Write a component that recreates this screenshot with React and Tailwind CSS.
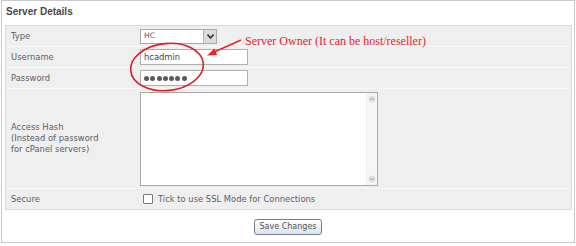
import React from "react";

export default function App() {
  const sans = { fontFamily: '"DejaVu Sans", Verdana, sans-serif' };
  return (
    <div className="w-[576px] h-[246px] bg-white relative overflow-hidden" style={sans}>
      <div className="ml-[1px] w-[574px] h-[243px] border border-[#c9c9c9] flex flex-col">
        <div
          className="h-[24px] pl-[4px] pt-[5px] text-[10px] font-bold text-[#484848] leading-[12px]"
          style={{ fontFamily: '"Liberation Sans", Arial, sans-serif' }}
        >
          Server Details
        </div>
        <div className="ml-[3px] mr-[2px] border border-[#d9d9d9] bg-[#efefef] text-[8.4px] text-[#5e5e5e]">
          <div className="grid grid-cols-[131px_1fr]">
            <div className="h-[21px] pl-[5px] flex items-center border-b border-[#f8f8f8]">Type</div>
            <div className="h-[21px] pl-[3px] flex items-center border-b border-[#f8f8f8]">
              <div className="w-[77px] h-[15px] bg-white border border-[#a9a9a9] flex items-center">
                <span className="flex-1 pl-[3px] text-[7.5px] text-[#555]">HC</span>
                <div className="w-[13px] h-[13px] border-l border-[#b5b5b5] bg-[#dcdcdc] flex items-center justify-center">
                  <svg width="7" height="5" viewBox="0 0 7 5"><path d="M0.5 0.5 L3.5 4 L6.5 0.5" fill="none" stroke="#333" strokeWidth="1.6" /></svg>
                </div>
              </div>
            </div>

            <div className="h-[21px] pl-[5px] flex items-center border-b border-[#f8f8f8]">Username</div>
            <div className="h-[21px] pl-[3px] flex items-center border-b border-[#f8f8f8]">
              <div className="w-[108px] h-[16px] bg-white border border-[#b0b0b0] flex items-center pl-[3px] text-[8.4px] text-[#444]">hcadmin</div>
            </div>

            <div className="h-[21px] pl-[5px] flex items-center border-b border-[#f8f8f8]">Password</div>
            <div className="h-[21px] pl-[3px] flex items-center border-b border-[#f8f8f8]">
              <div className="w-[108px] h-[16px] bg-white border border-[#b0b0b0] flex items-center pl-[3px] gap-[1.3px]">
                {[0, 1, 2, 3, 4, 5, 6].map((i) => (
                  <span key={i} className="w-[5px] h-[5px] rounded-full bg-[#5a5a5a]" />
                ))}
              </div>
            </div>

            <div className="h-[100px] pl-[5px] flex flex-col justify-center leading-[11px] border-b border-[#f8f8f8]">
              <span>Access Hash</span>
              <span>(Instead of password</span>
              <span>for cPanel servers)</span>
            </div>
            <div className="h-[100px] pl-[3px] flex items-center border-b border-[#f8f8f8]">
              <div className="w-[238px] h-[94px] bg-white border border-[#a9a9a9] flex justify-end">
                <div className="w-[11px] h-full bg-[#f6f6f6] border-l border-[#ececec] flex flex-col justify-between items-center py-[2px]">
                  <svg width="8" height="8" viewBox="0 0 8 8"><circle cx="4" cy="4" r="3.5" fill="#e2e2dc" /><path d="M2 5 L4 3 L6 5" fill="none" stroke="#aaa" strokeWidth="1" /></svg>
                  <svg width="8" height="8" viewBox="0 0 8 8"><circle cx="4" cy="4" r="3.5" fill="#e2e2dc" /><path d="M2 3 L4 5 L6 3" fill="none" stroke="#aaa" strokeWidth="1" /></svg>
                </div>
              </div>
            </div>

            <div className="h-[20px] pl-[5px] flex items-center">Secure</div>
            <div className="h-[20px] pl-[6px] flex items-center gap-[5px]">
              <span className="w-[10px] h-[10px] border border-[#7a7a7a] bg-white rounded-[1px]" />
              <span>Tick to use SSL Mode for Connections</span>
            </div>
          </div>
        </div>
        <div className="flex-1 flex items-center justify-center pt-[1px]">
          <button className="w-[68px] h-[16px] rounded-[3px] border border-[#6f7f98] bg-gradient-to-b from-[#ffffff] to-[#dde3ec] text-[8px] text-[#555] leading-[12px]">
            Save Changes
          </button>
        </div>
      </div>

      <div
        className="absolute left-[245px] top-[34px] text-[12px] text-[#e3262b] leading-[14px] whitespace-nowrap"
        style={{ fontFamily: '"Liberation Serif", serif' }}
      >
        Server Owner (It can be host/reseller)
      </div>
      <svg className="absolute left-0 top-0 pointer-events-none" width="576" height="246" viewBox="0 0 576 246">
        <ellipse cx="167" cy="67" rx="36.5" ry="23.5" transform="rotate(-6 167 67)" fill="none" stroke="#d9202a" strokeWidth="1.6" />
        <path d="M241 40 L212 53" stroke="#e3262b" strokeWidth="1.6" fill="none" />
        <path d="M207 55.5 L214.5 48.5 L217 55 Z" fill="#e3262b" />
      </svg>
    </div>
  );
}
